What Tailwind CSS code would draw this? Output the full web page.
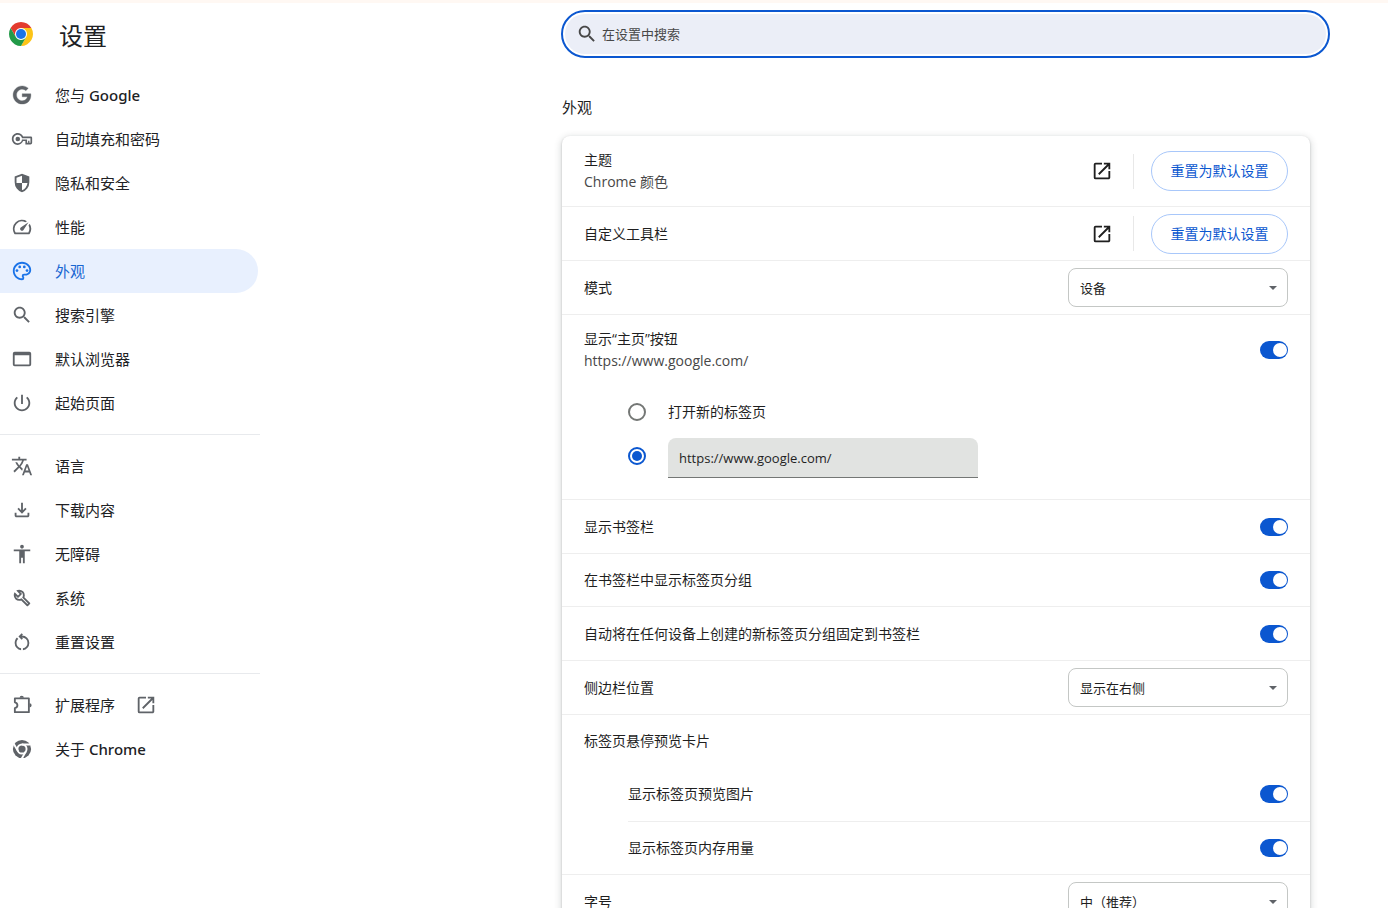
<!DOCTYPE html>
<html lang="zh-CN">
<head>
<meta charset="utf-8">
<meta name="viewport" content="width=device-width, initial-scale=1">
<title>设置 - 外观</title>
<script src="https://cdn.jsdelivr.net/npm/@tailwindcss/browser@4"></script>
</head>
<body class="flex h-screen overflow-hidden border-t-3 border-[#fff8f3] bg-white font-['Open_Sans','Noto_Sans_CJK_SC',sans-serif] text-[14px] leading-[22px] text-[#1f1f1f]">

<!-- Sidebar -->
<aside class="w-[260px] shrink-0 overflow-hidden">
  <header class="flex h-[62px] items-center gap-[26px] pl-[9px]">
    <svg class="size-6 shrink-0" viewBox="0 0 48 48" aria-hidden="true">
      <circle cx="24" cy="24" r="13" fill="#fff"/>
      <path fill="#e33b2e" d="M24 12H44.78A24 24 0 0 0 3.22 12L13.61 30A12 12 0 0 1 24 12z"/>
      <path fill="#fcc417" d="M24 12H44.78A24 24 0 0 1 24 48L34.39 30A12 12 0 0 0 24 12z"/>
      <path fill="#229a48" d="M13.61 30L3.22 12A24 24 0 0 0 24 48L34.39 30A12 12 0 0 1 13.61 30z"/>
      <circle cx="24" cy="24" r="10" fill="#1a73e8"/>
    </svg>
    <h1 class="pt-1 text-[24px] leading-8 text-[#202124]">设置</h1>
  </header>
  <nav class="mt-2 text-[15px] text-[#202124]" aria-label="设置">
    <ul>
      <li><a href="#people" class="flex h-11 items-center gap-[22px] pl-[11px]">
        <svg class="size-[22px] shrink-0 fill-[#5f6368]" viewBox="-2.5 -2.5 29 29" aria-hidden="true"><path stroke="#5f6368" stroke-width=".4" d="M12.24 10.285V14.4h6.806c-.275 1.765-2.056 5.174-6.806 5.174-4.095 0-7.439-3.389-7.439-7.574s3.345-7.574 7.439-7.574c2.33 0 3.891.989 4.785 1.849l3.254-3.138C18.189 1.186 15.479 0 12.24 0c-6.635 0-12 5.365-12 12s5.365 12 12 12c6.926 0 11.52-4.869 11.52-11.726 0-.788-.085-1.39-.189-1.989H12.24z"/></svg>
        <span>您与 <span class="font-['Noto_Sans',sans-serif] font-medium">Google</span></span></a></li>
      <li><a href="#autofill" class="flex h-11 items-center gap-[22px] pl-[11px]">
        <svg class="size-[22px] shrink-0 fill-[#5f6368]" viewBox="-1 -1 26 26" aria-hidden="true"><path fill-rule="evenodd" d="M22 18.500h-6v-4h-2.680c-1.140 2.500-3.600 4.500-6.320 4.500-3.860 0-7-3.140-7-7s3.140-7 7-7c2.720 0 5.170 1.580 6.320 4H22.500Q24 9 24 10.500V16.500Q24 18.500 22 18.500zM18 16.500h1.200v-2.500h1.600v2.500H22V11H11.940l-.23-.67C11.010 8.340 9.110 7 7 7c-2.760 0-5 2.240-5 5s2.240 5 5 5c2.110 0 4.010-1.340 4.710-3.330l.23-1.170H18v4z"/><circle cx="7" cy="12" r="2.700"/></svg>
        <span>自动填充和密码</span></a></li>
      <li><a href="#privacy" class="flex h-11 items-center gap-[22px] pl-[11px]">
        <svg class="size-[22px] shrink-0 fill-[#5f6368]" viewBox="0 -960 960 960" aria-hidden="true"><path d="M480-80q-139-35-229.500-159.500T160-516v-244l320-120 320 120v244q0 152-90.500 276.500T480-80Zm0-84q97-30 162-118.500T718-480H480v-315l-240 90v207q0 7 2 18h238v316Z"/></svg>
        <span>隐私和安全</span></a></li>
      <li><a href="#performance" class="flex h-11 items-center gap-[22px] pl-[11px]">
        <svg class="size-[22px] shrink-0 fill-[#5f6368]" viewBox="0 0 24 24" aria-hidden="true"><path d="M20.38 8.570l-1.230 1.850a8 8 0 0 1-.22 7.580H5.070A8 8 0 0 1 15.580 6.850l1.850-1.230A10 10 0 0 0 3.350 19a2 2 0 0 0 1.720 1h13.850a2 2 0 0 0 1.740-1 10 10 0 0 0-.27-10.440zm-9.790 6.840a2 2 0 0 0 2.830 0l5.660-8.490-8.490 5.660a2 2 0 0 0 0 2.830z"/></svg>
        <span>性能</span></a></li>
      <li><a href="#appearance" aria-current="page" class="mr-0.5 flex h-11 items-center gap-[22px] rounded-r-full bg-[#e8f0fe] pl-[11px] text-[#1967d2]">
        <svg class="size-[22px] shrink-0 fill-[#1a73e8]" viewBox="0 0 24 24" aria-hidden="true"><path d="M12 22C6.490 22 2 17.510 2 12S6.490 2 12 2s10 4.040 10 9c0 3.310-2.690 6-6 6h-1.770c-.28 0-.5.22-.5.5 0 .12.05.23.13.33.41.47.64 1.060.64 1.670A2.500 2.500 0 0 1 12 22zm0-18c-4.410 0-8 3.590-8 8s3.590 8 8 8c.28 0 .5-.22.5-.5a.54.54 0 0 0-.14-.35c-.41-.46-.63-1.050-.63-1.650a2.500 2.500 0 0 1 2.500-2.500H16c2.210 0 4-1.790 4-4 0-3.860-3.590-7-8-7z"/><circle cx="6.500" cy="11.500" r="1.500"/><circle cx="9.500" cy="7.500" r="1.500"/><circle cx="14.500" cy="7.500" r="1.500"/><circle cx="17.500" cy="11.500" r="1.500"/></svg>
        <span>外观</span></a></li>
      <li><a href="#search" class="flex h-11 items-center gap-[22px] pl-[11px]">
        <svg class="size-[22px] shrink-0 fill-[#5f6368]" viewBox="0 0 24 24" aria-hidden="true"><path d="M15.500 14h-.79l-.28-.27C15.410 12.590 16 11.110 16 9.500 16 5.910 13.090 3 9.500 3S3 5.910 3 9.500 5.910 16 9.500 16c1.610 0 3.090-.59 4.230-1.570l.27.28v.79l5 4.990L20.490 19l-4.990-5zm-6 0C7.010 14 5 11.990 5 9.500S7.010 5 9.500 5 14 7.010 14 9.500 11.990 14 9.500 14z"/></svg>
        <span>搜索引擎</span></a></li>
      <li><a href="#browser" class="flex h-11 items-center gap-[22px] pl-[11px]">
        <svg class="size-[22px] shrink-0 fill-[#5f6368]" viewBox="0 0 24 24" aria-hidden="true"><path d="M20 4H4a2 2 0 0 0-2 2v12a2 2 0 0 0 2 2h16a2 2 0 0 0 2-2V6a2 2 0 0 0-2-2zm0 14H4V8h16v10z"/></svg>
        <span>默认浏览器</span></a></li>
      <li><a href="#startup" class="flex h-11 items-center gap-[22px] pl-[11px]">
        <svg class="size-[22px] shrink-0 fill-[#5f6368]" viewBox="0 0 24 24" aria-hidden="true"><path d="M13 3h-2v10h2V3zm4.830 2.170l-1.420 1.420C17.990 7.860 19 9.810 19 12c0 3.870-3.130 7-7 7s-7-3.130-7-7c0-2.190 1.010-4.140 2.580-5.420L6.170 5.170C4.230 6.820 3 9.260 3 12c0 4.970 4.030 9 9 9s9-4.030 9-9c0-2.740-1.230-5.180-3.170-6.830z"/></svg>
        <span>起始页面</span></a></li>
    </ul>
    <hr class="my-[9px] border-[#e8eaed]">
    <ul>
      <li><a href="#languages" class="flex h-11 items-center gap-[22px] pl-[11px]">
        <svg class="size-[22px] shrink-0 fill-[#5f6368]" viewBox="0 0 24 24" aria-hidden="true"><path d="M12.870 15.070l-2.540-2.510.03-.03c1.740-1.940 2.980-4.170 3.710-6.530H17V4h-7V2H8v2H1v1.990h11.170C11.500 7.920 10.440 9.750 9 11.350 8.070 10.320 7.300 9.190 6.690 8h-2c.73 1.630 1.730 3.170 2.980 4.560l-5.090 5.020L4 19l5-5 3.110 3.110.76-2.040zM18.500 10h-2L12 22h2l1.120-3h4.750L21 22h2l-4.500-12zm-2.620 7l1.620-4.330L19.120 17h-3.240z"/></svg>
        <span>语言</span></a></li>
      <li><a href="#downloads" class="flex h-11 items-center gap-[22px] pl-[11px]">
        <svg class="size-[22px] shrink-0 fill-[#5f6368]" viewBox="0 -960 960 960" aria-hidden="true"><path d="M480-320 280-520l56-58 104 104v-326h80v326l104-104 56 58-200 200ZM240-160q-33 0-56.500-23.500T160-240v-120h80v120h480v-120h80v120q0 33-23.500 56.500T720-160H240Z"/></svg>
        <span>下载内容</span></a></li>
      <li><a href="#accessibility" class="flex h-11 items-center gap-[22px] pl-[11px]">
        <svg class="size-[22px] shrink-0 fill-[#5f6368]" viewBox="0 0 24 24" aria-hidden="true"><path d="M12 2c1.100 0 2 .9 2 2s-.9 2-2 2-2-.9-2-2 .9-2 2-2zm9 7h-6v13h-2v-6h-2v6H9V9H3V7h18v2z"/></svg>
        <span>无障碍</span></a></li>
      <li><a href="#system" class="flex h-11 items-center gap-[22px] pl-[11px]">
        <svg class="size-[22px] shrink-0 fill-[#5f6368]" viewBox="0 -960 960 960" aria-hidden="true"><path d="M686-132 444-376q-20 8-40.500 12t-43.500 4q-100 0-170-70t-70-170q0-36 10-68.500t28-61.500l146 146 72-72-146-146q29-18 61.500-28t68.500-10q100 0 170 70t70 170q0 23-4 43.500T584-516l244 242q12 12 12 29t-12 29l-84 84q-12 12-29 12t-29-12Zm29-85 27-27-256-256q18-20 26-46.500t8-53.500q0-60-38.500-104.500T386-758l74 74q12 12 12 28t-12 28L332-500q-12 12-28 12t-28-12l-74-74q9 57 53.500 95.500T360-440q26 0 52-8t47-25l256 256Z"/></svg>
        <span>系统</span></a></li>
      <li><a href="#reset" class="flex h-11 items-center gap-[22px] pl-[11px]">
        <svg class="size-[22px] shrink-0 fill-[#5f6368]" viewBox="0 -960 960 960" aria-hidden="true"><path d="M440-122q-121-15-200.500-105.500T160-440q0-66 26-126.500T260-672l57 57q-38 34-57.500 79T240-440q0 88 56 155.500T440-202v80Zm80 0v-80q87-16 143.500-83T720-440q0-100-70-170t-170-70h-3l44 44-56 56-140-140 140-140 56 56-44 44h3q134 0 227 93t93 227q0 121-79.500 211.500T520-122Z"/></svg>
        <span>重置设置</span></a></li>
    </ul>
    <hr class="my-[9px] border-[#e8eaed]">
    <ul>
      <li><a href="#extensions" class="flex h-11 items-center gap-[22px] pl-[11px]">
        <svg class="size-[22px] shrink-0 fill-[#5f6368]" viewBox="0 0 24 24" aria-hidden="true"><path fill="none" stroke="#5f6368" stroke-width="2" stroke-linejoin="round" d="M4.200 4.800H19.500V19.800H4.200V15.500Q7 15 7 12.300T4.200 9.100z"/><path d="M9.400 4.200a2.300 2.300 0 0 1 4.600 0zM20.200 10a2.300 2.300 0 0 1 0 4.600z"/></svg>
        <span>扩展程序</span>
        <svg class="-ml-0.5 size-[22px] shrink-0 fill-[#5f6368]" viewBox="0 0 24 24" aria-hidden="true"><path d="M19 19H5V5h7V3H5a2 2 0 0 0-2 2v14a2 2 0 0 0 2 2h14c1.100 0 2-.9 2-2v-7h-2v7zM14 3v2h3.590l-9.830 9.830 1.410 1.410L19 6.410V10h2V3h-7z"/></svg></a></li>
      <li><a href="#about" class="flex h-11 items-center gap-[22px] pl-[11px]">
        <svg class="size-[22px] shrink-0" viewBox="-5 -5 58 58" aria-hidden="true"><circle cx="24" cy="24" r="24" fill="#5f6368"/><circle cx="24" cy="24" r="12" fill="#5f6368" stroke="#fff" stroke-width="5"/><path fill="none" stroke="#fff" stroke-width="5" d="M24 12H46M34.400 30L23.500 49M13.600 30L2.500 11"/></svg>
        <span>关于 <span class="font-['Noto_Sans',sans-serif] font-medium">Chrome</span></span></a></li>
    </ul>
  </nav>
</aside>

<!-- Content -->
<main class="min-w-0 flex-1 overflow-y-auto pt-[7px] pr-[58px] pl-6 [scrollbar-width:none]">
  <div class="ml-auto w-full max-w-[769px]">
    <div class="rounded-full border-2 border-[#0b57d0] p-0.5">
      <label class="flex h-10 items-center gap-1 rounded-full bg-[#ebeef7] pl-[11px]">
        <svg class="size-[22px] shrink-0 fill-[#474747]" viewBox="0 0 24 24" aria-hidden="true"><path d="M15.500 14h-.79l-.28-.27C15.410 12.590 16 11.110 16 9.500 16 5.910 13.090 3 9.500 3S3 5.910 3 9.500 5.910 16 9.500 16c1.610 0 3.090-.59 4.230-1.570l.27.28v.79l5 4.990L20.490 19l-4.990-5zm-6 0C7.010 14 5 11.990 5 9.500S7.010 5 9.500 5 14 7.010 14 9.500 11.990 14 9.500 14z"/></svg>
        <input type="search" aria-label="在设置中搜索" placeholder="在设置中搜索" class="min-w-0 flex-1 bg-transparent text-[13px] outline-none placeholder:text-[#474747]">
      </label>
    </div>

    <section class="mr-5 ml-px">
      <h2 class="mt-[37px] mb-[17px] text-[15px] leading-6">外观</h2>
      <div class="rounded-lg bg-white shadow-[0_1px_2px_rgba(60,64,67,0.3),0_2px_6px_2px_rgba(60,64,67,0.15)]">

        <div class="flex h-[70px] items-center px-[22px]">
          <div class="flex-1">
            <div>主题</div>
            <div class="text-[#474747]">Chrome 颜色</div>
          </div>
          <a href="#theme" aria-label="打开主题" class="mr-5"><svg class="size-[22px] fill-[#1f1f1f]" viewBox="0 0 24 24" aria-hidden="true"><path d="M19 19H5V5h7V3H5a2 2 0 0 0-2 2v14a2 2 0 0 0 2 2h14c1.100 0 2-.9 2-2v-7h-2v7zM14 3v2h3.590l-9.830 9.830 1.410 1.410L19 6.410V10h2V3h-7z"/></svg></a>
          <span class="mr-[17px] h-[35px] w-px bg-[#e8e8e8]"></span>
          <button type="button" class="h-10 w-[137px] rounded-full border border-[#a8c7fa] text-[#0b57d0]">重置为默认设置</button>
        </div>

        <div class="flex h-[54px] items-center border-t border-[#eeeeee] px-[22px]">
          <div class="flex-1">自定义工具栏</div>
          <a href="#toolbar" aria-label="打开自定义工具栏" class="mr-5"><svg class="size-[22px] fill-[#1f1f1f]" viewBox="0 0 24 24" aria-hidden="true"><path d="M19 19H5V5h7V3H5a2 2 0 0 0-2 2v14a2 2 0 0 0 2 2h14c1.100 0 2-.9 2-2v-7h-2v7zM14 3v2h3.590l-9.830 9.830 1.410 1.410L19 6.410V10h2V3h-7z"/></svg></a>
          <span class="mr-[17px] h-[35px] w-px bg-[#e8e8e8]"></span>
          <button type="button" class="h-10 w-[137px] rounded-full border border-[#a8c7fa] text-[#0b57d0]">重置为默认设置</button>
        </div>

        <div class="flex h-[54px] items-center border-t border-[#eeeeee] px-[22px]">
          <label for="mode" class="flex-1">模式</label>
          <div class="relative">
            <select id="mode" class="h-[39px] w-[220px] appearance-none rounded-lg border border-[#c4c7c5] bg-white px-[11px] text-[13px]"><option>设备</option><option>浅色</option><option>深色</option></select>
            <svg class="pointer-events-none absolute top-[18px] right-[11px] h-1 w-2 fill-[#5f6368]" viewBox="0 0 8 4" aria-hidden="true"><path d="M0 0h8L4 4z"/></svg>
          </div>
        </div>

        <div class="border-t border-[#eeeeee] px-[22px] pb-[21px]">
          <div class="flex h-[70px] items-center">
            <label for="home" class="flex-1">
              <span class="block">显示“主页”按钮</span>
              <span class="block text-[#474747]">https://www.google.com/</span>
            </label>
            <input id="home" type="checkbox" role="switch" checked class="flex h-[18px] w-7 appearance-none items-center rounded-full bg-[#747775] px-px before:size-[14px] before:rounded-full before:bg-white checked:justify-end checked:bg-[#0b57d0]">
          </div>
          <div class="mt-[5px] pl-11" role="radiogroup" aria-label="主页">
            <label class="flex h-11 items-center gap-[22px]">
              <input type="radio" name="home-page" class="flex size-[18px] shrink-0 appearance-none items-center justify-center rounded-full border-2 border-[#747775] checked:border-[#0b57d0] checked:before:size-[10px] checked:before:rounded-full checked:before:bg-[#0b57d0]">
              <span>打开新的标签页</span>
            </label>
            <div class="flex h-11 items-center gap-[22px]">
              <input type="radio" name="home-page" checked aria-label="自定义网址" class="flex size-[18px] shrink-0 appearance-none items-center justify-center rounded-full border-2 border-[#747775] checked:border-[#0b57d0] checked:before:size-[10px] checked:before:rounded-full checked:before:bg-[#0b57d0]">
              <input type="text" aria-label="主页网址" value="https://www.google.com/" class="h-10 w-[310px] self-end rounded-t-lg border-b border-[#747775] bg-[#e1e3e1] px-[11px] text-[13px] outline-none">
            </div>
          </div>
        </div>

        <div class="flex h-[54px] items-center border-t border-[#eeeeee] px-[22px]">
          <label for="bookmarks" class="flex-1">显示书签栏</label>
          <input id="bookmarks" type="checkbox" role="switch" checked class="flex h-[18px] w-7 appearance-none items-center rounded-full bg-[#747775] px-px before:size-[14px] before:rounded-full before:bg-white checked:justify-end checked:bg-[#0b57d0]">
        </div>
        <div class="flex h-[53px] items-center border-t border-[#eeeeee] px-[22px]">
          <label for="groups" class="flex-1">在书签栏中显示标签页分组</label>
          <input id="groups" type="checkbox" role="switch" checked class="flex h-[18px] w-7 appearance-none items-center rounded-full bg-[#747775] px-px before:size-[14px] before:rounded-full before:bg-white checked:justify-end checked:bg-[#0b57d0]">
        </div>
        <div class="flex h-[54px] items-center border-t border-[#eeeeee] px-[22px]">
          <label for="pin" class="flex-1">自动将在任何设备上创建的新标签页分组固定到书签栏</label>
          <input id="pin" type="checkbox" role="switch" checked class="flex h-[18px] w-7 appearance-none items-center rounded-full bg-[#747775] px-px before:size-[14px] before:rounded-full before:bg-white checked:justify-end checked:bg-[#0b57d0]">
        </div>

        <div class="flex h-[54px] items-center border-t border-[#eeeeee] px-[22px]">
          <label for="side" class="flex-1">侧边栏位置</label>
          <div class="relative">
            <select id="side" class="h-[39px] w-[220px] appearance-none rounded-lg border border-[#c4c7c5] bg-white px-[11px] text-[13px]"><option>显示在右侧</option><option>显示在左侧</option></select>
            <svg class="pointer-events-none absolute top-[18px] right-[11px] h-1 w-2 fill-[#5f6368]" viewBox="0 0 8 4" aria-hidden="true"><path d="M0 0h8L4 4z"/></svg>
          </div>
        </div>

        <div class="border-t border-[#eeeeee]">
          <div class="flex h-[52px] items-center px-[22px]">标签页悬停预览卡片</div>
          <div class="ml-[66px] flex h-[54px] items-center pr-[22px]">
            <label for="preview" class="flex-1">显示标签页预览图片</label>
            <input id="preview" type="checkbox" role="switch" checked class="flex h-[18px] w-7 appearance-none items-center rounded-full bg-[#747775] px-px before:size-[14px] before:rounded-full before:bg-white checked:justify-end checked:bg-[#0b57d0]">
          </div>
          <div class="ml-[66px] flex h-[53px] items-center border-t border-[#eeeeee] pr-[22px]">
            <label for="memory" class="flex-1">显示标签页内存用量</label>
            <input id="memory" type="checkbox" role="switch" checked class="flex h-[18px] w-7 appearance-none items-center rounded-full bg-[#747775] px-px before:size-[14px] before:rounded-full before:bg-white checked:justify-end checked:bg-[#0b57d0]">
          </div>
        </div>

        <div class="flex h-[54px] items-center border-t border-[#eeeeee] px-[22px]">
          <label for="size" class="flex-1">字号</label>
          <div class="relative">
            <select id="size" class="h-[39px] w-[220px] appearance-none rounded-lg border border-[#c4c7c5] bg-white px-[11px] text-[13px]"><option>中（推荐）</option><option>大</option></select>
            <svg class="pointer-events-none absolute top-[18px] right-[11px] h-1 w-2 fill-[#5f6368]" viewBox="0 0 8 4" aria-hidden="true"><path d="M0 0h8L4 4z"/></svg>
          </div>
        </div>
      </div>
    </section>
  </div>
</main>
</body>
</html>
